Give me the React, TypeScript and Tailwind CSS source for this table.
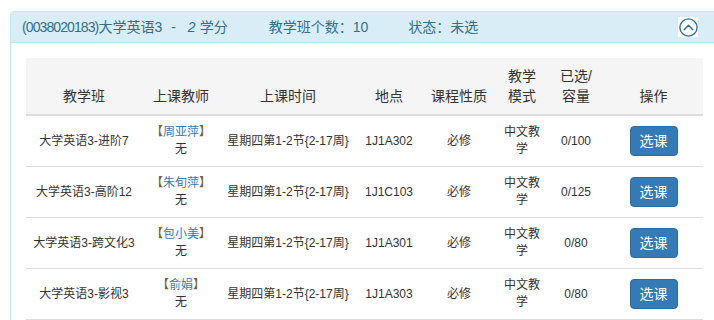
import React from "react";

type Row = {
  name: string;
  teacher: string;
  place: string;
  cap: string;
};

const rows: Row[] = [
  { name: "大学英语3-进阶7", teacher: "周亚萍", place: "1J1A302", cap: "0/100" },
  { name: "大学英语3-高阶12", teacher: "朱旬萍", place: "1J1C103", cap: "0/125" },
  { name: "大学英语3-跨文化3", teacher: "包小美", place: "1J1A301", cap: "0/80" },
  { name: "大学英语3-影视3", teacher: "俞娟", place: "1J1A303", cap: "0/80" },
];

const font = { fontFamily: '"Liberation Sans", Arial, "Noto Sans CJK SC", sans-serif' };

export default function App() {
  return (
    <div
      className="w-[714px] h-[320px] overflow-hidden bg-white pt-[11px] pl-[10px]"
      style={font}
    >
      <div className="w-[709px] border border-[#bce8f1] rounded-t-[4px]">
        <div className="h-[31px] bg-[#d9edf7] border-b border-[#bce8f1] flex items-center pl-[11px] text-[14px] text-[#31708f] rounded-t-[3px]">
          <span className="whitespace-nowrap flex items-center">
            <span className="tracking-[-0.9px]">(0038020183)</span>
            <span>大学英语3</span>
            <span className="ml-[9px]">-</span>
            <i className="ml-[12px]">2</i>
            <span className="ml-[4px]">学分</span>
          </span>
          <span className="ml-[41px] whitespace-nowrap">教学班个数：10</span>
          <span className="ml-[40px] whitespace-nowrap">状态：未选</span>
          <span className="ml-auto mr-[20px] w-[20px] h-[20px] bg-white flex items-center justify-center">
            <svg width="19" height="19" viewBox="0 0 19 19" fill="none">
              <circle cx="9.5" cy="9.5" r="8.6" stroke="#2f6f96" strokeWidth="1.4" />
              <path d="M5.2 11.8 L9.5 7.2 L13.8 11.8" stroke="#2f6f96" strokeWidth="1.5" strokeLinecap="round" strokeLinejoin="round" />
            </svg>
          </span>
        </div>
        <div className="pt-[15px] pl-[15px] pr-[15px]">
          <table className="w-[677px] table-fixed border-collapse text-[#333]">
            <colgroup>
              <col className="w-[116px]" />
              <col className="w-[78px]" />
              <col className="w-[136px]" />
              <col className="w-[66px]" />
              <col className="w-[74px]" />
              <col className="w-[52px]" />
              <col className="w-[56px]" />
              <col className="w-[99px]" />
            </colgroup>
            <thead>
              <tr className="bg-[#f5f5f5] text-[14px] leading-[20px]">
                <th className="font-normal align-bottom text-center px-2 py-2 border-b-2 border-[#dddddd]">教学班</th>
                <th className="font-normal align-bottom text-center px-2 py-2 border-b-2 border-[#dddddd]">上课教师</th>
                <th className="font-normal align-bottom text-center px-2 py-2 border-b-2 border-[#dddddd]">上课时间</th>
                <th className="font-normal align-bottom text-center px-2 py-2 border-b-2 border-[#dddddd]">地点</th>
                <th className="font-normal align-bottom text-center px-1 py-2 border-b-2 border-[#dddddd]">课程性质</th>
                <th className="font-normal align-bottom text-center px-2 py-2 border-b-2 border-[#dddddd]">教学模式</th>
                <th className="font-normal align-bottom text-center px-2 py-2 border-b-2 border-[#dddddd]">已选/容量</th>
                <th className="font-normal align-bottom text-center px-2 py-2 border-b-2 border-[#dddddd]">操作</th>
              </tr>
            </thead>
            <tbody className="text-[12px] leading-[17px]">
              {rows.map((r) => (
                <tr key={r.name} className="border-b border-[#dddddd]">
                  <td className="text-center align-middle px-1 py-2 whitespace-nowrap">{r.name}</td>
                  <td className="text-center align-middle px-1 py-2 whitespace-nowrap">
                    <div>
                      <span className="text-[#7b5e34]">【</span>
                      <span className="text-[#337ab7]">{r.teacher}</span>
                      <span className="text-[#7b5e34]">】</span>
                    </div>
                    <div>无</div>
                  </td>
                  <td className="text-center align-middle px-1 py-2 whitespace-nowrap">星期四第1-2节{"{2-17周}"}</td>
                  <td className="text-center align-middle px-1 py-2">{r.place}</td>
                  <td className="text-center align-middle px-1 py-2">必修</td>
                  <td className="text-center align-middle px-[4px] py-2">中文教学</td>
                  <td className="text-center align-middle px-1 py-2">{r.cap}</td>
                  <td className="text-center align-middle px-2 py-2">
                    <button className="w-[48px] h-[30px] rounded-[4px] bg-[#337ab7] border border-[#2e6da4] text-white text-[14px] leading-[20px]">
                      选课
                    </button>
                  </td>
                </tr>
              ))}
            </tbody>
          </table>
        </div>
      </div>
    </div>
  );
}
